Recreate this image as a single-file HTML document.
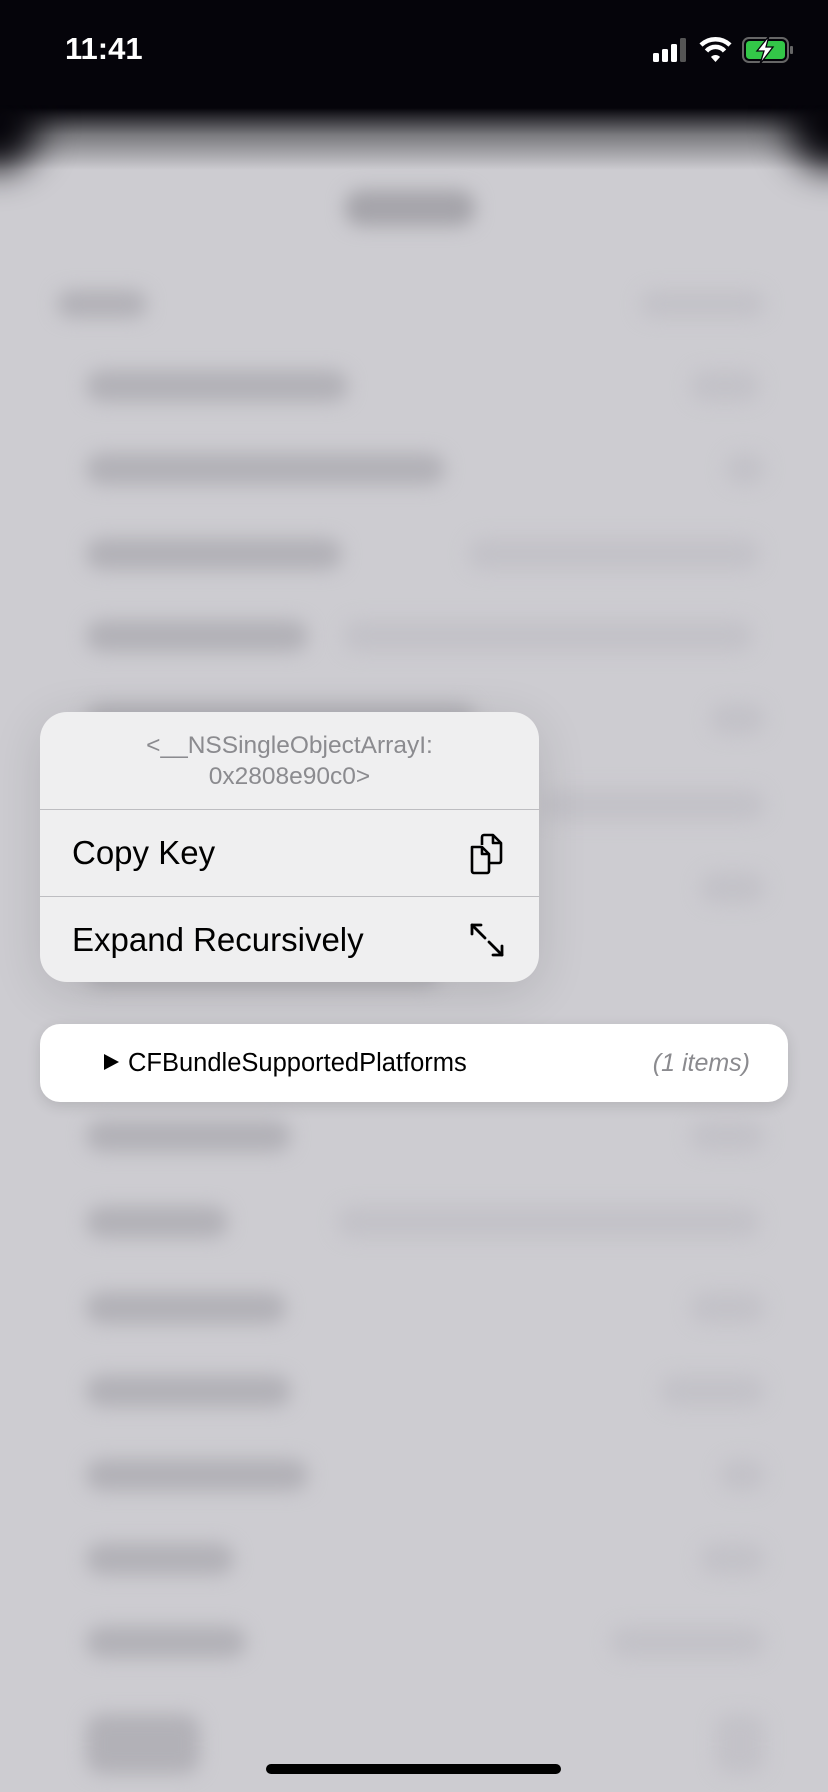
<!DOCTYPE html>
<html><head><meta charset="utf-8"><style>
html,body{margin:0;padding:0;width:828px;height:1792px;overflow:hidden}
#w{width:828px;height:1792px;position:relative;overflow:hidden;background:#cdccd1;font-family:"Liberation Sans",sans-serif}
.top{position:absolute;left:0;top:0;width:828px;height:200px;background:linear-gradient(#05040a 0,#05040a 108px,#7a7a7e 135px,#cdccd1 170px)}
.corner{position:absolute;width:90px;height:90px;background:#05040a;filter:blur(18px);border-radius:50%}
.bl{position:absolute;filter:blur(9px);border-radius:16px}
.d{background:#b2b1b7}
.l{background:#c3c2c8}
.menu{position:absolute;left:40px;top:712px;width:499px;height:270px;background:#efeff0;border-radius:27px;overflow:hidden;box-shadow:0 10px 50px rgba(0,0,0,.12)}
.title{height:97px;text-align:center;color:#8b8b8f;font-size:24.5px;line-height:31px;padding-top:18px;box-sizing:border-box}
.sep{height:1px;background:#bdbdc1}
.item{height:86px;position:relative;font-size:33px;color:#000;line-height:86px;padding-left:32px}
.item svg{position:absolute;right:34px;top:23px}
.card{position:absolute;left:40px;top:1024px;width:748px;height:78px;background:#fff;border-radius:20px;box-shadow:0 4px 14px rgba(0,0,0,.12)}
.status{position:absolute;top:31px;left:65px;color:#fff;font-size:31px;font-weight:bold}
.home{position:absolute;left:266px;top:1764px;width:295px;height:10px;border-radius:5px;background:#000}
</style></head><body><div id="w">
<div class="top"></div>
<div class="corner" style="left:-50px;top:80px"></div>
<div class="corner" style="right:-50px;top:80px"></div>
<div style="position:absolute;left:0;top:0;width:828px;height:105px;background:#05040a"></div>
<div class="bl" style="left:345px;top:190px;width:130px;height:36px;background:#a5a4aa"></div>
<div class="bl d" style="left:57px;top:290px;width:90px;height:28px"></div>
<div class="bl l" style="left:640px;top:290px;width:125px;height:28px"></div>
<div class="bl d" style="left:86px;top:370px;width:262px;height:32px"></div>
<div class="bl l" style="left:690px;top:370px;width:70px;height:32px"></div>
<div class="bl d" style="left:86px;top:453px;width:359px;height:32px"></div>
<div class="bl l" style="left:725px;top:453px;width:40px;height:32px"></div>
<div class="bl d" style="left:86px;top:538px;width:256px;height:32px"></div>
<div class="bl l" style="left:468px;top:538px;width:292px;height:32px"></div>
<div class="bl d" style="left:86px;top:620px;width:222px;height:32px"></div>
<div class="bl l" style="left:343px;top:620px;width:410px;height:32px"></div>
<div class="bl d" style="left:86px;top:703px;width:390px;height:32px"></div>
<div class="bl l" style="left:710px;top:703px;width:55px;height:32px"></div>
<div class="bl l" style="left:540px;top:789px;width:225px;height:32px"></div>
<div class="bl l" style="left:700px;top:872px;width:65px;height:32px"></div>
<div class="bl d" style="left:86px;top:955px;width:354px;height:32px"></div>
<div class="bl d" style="left:86px;top:1120px;width:205px;height:32px"></div>
<div class="bl l" style="left:690px;top:1120px;width:75px;height:32px"></div>
<div class="bl d" style="left:86px;top:1206px;width:142px;height:32px"></div>
<div class="bl l" style="left:337px;top:1206px;width:423px;height:32px"></div>
<div class="bl d" style="left:86px;top:1292px;width:200px;height:32px"></div>
<div class="bl l" style="left:690px;top:1292px;width:75px;height:32px"></div>
<div class="bl d" style="left:86px;top:1375px;width:205px;height:32px"></div>
<div class="bl l" style="left:660px;top:1375px;width:105px;height:32px"></div>
<div class="bl d" style="left:86px;top:1459px;width:222px;height:32px"></div>
<div class="bl l" style="left:720px;top:1459px;width:45px;height:32px"></div>
<div class="bl d" style="left:86px;top:1543px;width:148px;height:32px"></div>
<div class="bl l" style="left:700px;top:1543px;width:65px;height:32px"></div>
<div class="bl d" style="left:86px;top:1626px;width:160px;height:32px"></div>
<div class="bl l" style="left:610px;top:1626px;width:155px;height:32px"></div>
<div class="bl d" style="left:86px;top:1714px;width:114px;height:60px"></div>
<div class="bl l" style="left:715px;top:1714px;width:50px;height:60px"></div>

<div class="status">11:41</div>
<svg style="position:absolute;left:650px;top:36px" width="150" height="28" viewBox="0 0 150 28">
<rect x="3" y="17" width="6" height="9" rx="1.5" fill="#fff"/>
<rect x="12" y="13" width="6" height="13" rx="1.5" fill="#fff"/>
<rect x="21" y="8" width="6" height="18" rx="1.5" fill="#fff"/>
<rect x="30" y="2" width="6" height="24" rx="1.5" fill="#555"/>
<path d="M51 9 A21 21 0 0 1 80 9" stroke="#fff" stroke-width="4.5" fill="none"/>
<path d="M56.5 15 A12 12 0 0 1 74.5 15" stroke="#fff" stroke-width="4.5" fill="none"/>
<path d="M61 21 L65.5 26 L70 21 A6 6 0 0 0 61 21Z" fill="#fff"/>
<rect x="93" y="2" width="45" height="24" rx="6" fill="none" stroke="#666" stroke-width="2"/>
<rect x="96" y="5" width="39" height="18" rx="3.5" fill="#33c748"/>
<rect x="140" y="10" width="3" height="8" rx="1" fill="#666"/>
<path d="M119 0 L107 15 L114 15 L110 28 L123 11 L116 11 Z" fill="#fff" stroke="#05040a" stroke-width="1.3"/>
</svg>

<div class="menu">
<div class="title">&lt;__NSSingleObjectArrayI:<br>0x2808e90c0&gt;</div>
<div class="sep"></div>
<div class="item">Copy Key
<svg width="36" height="42" viewBox="0 0 36 42" fill="none" stroke="#000" stroke-width="2.6" stroke-linejoin="round"><path d="M3 14 h10 l7 7 v17 a2 2 0 0 1 -2 2 h-13 a2 2 0 0 1 -2 -2z"/><path d="M13 14 v7 h7"/><path d="M13 12 v-8 a2 2 0 0 1 2 -2 h9 l8 8 v18 a2 2 0 0 1 -2 2 h-10"/><path d="M24 2 v8 h8"/></svg></div>
<div class="sep"></div>
<div class="item">Expand Recursively
<svg width="36" height="40" viewBox="0 0 36 40" fill="none" stroke="#000" stroke-width="2.8" stroke-linecap="round" stroke-linejoin="round"><path d="M3 5 L16 18"/><path d="M3 14 V5 H12"/><path d="M20 22 L33 35"/><path d="M33 26 V35 H24"/></svg></div>
</div>

<div class="card">
<svg style="position:absolute;left:63px;top:29px" width="17" height="18"><path d="M1 1 L16 9 L1 17Z" fill="#000"/></svg>
<div style="position:absolute;left:88px;top:0;line-height:78px;font-size:25.5px;color:#000">CFBundleSupportedPlatforms</div>
<div style="position:absolute;right:38px;top:0;line-height:78px;font-size:25px;color:#8b8b8f;font-style:italic">(1 items)</div>
</div>
<div class="home"></div>
</div></body></html>
